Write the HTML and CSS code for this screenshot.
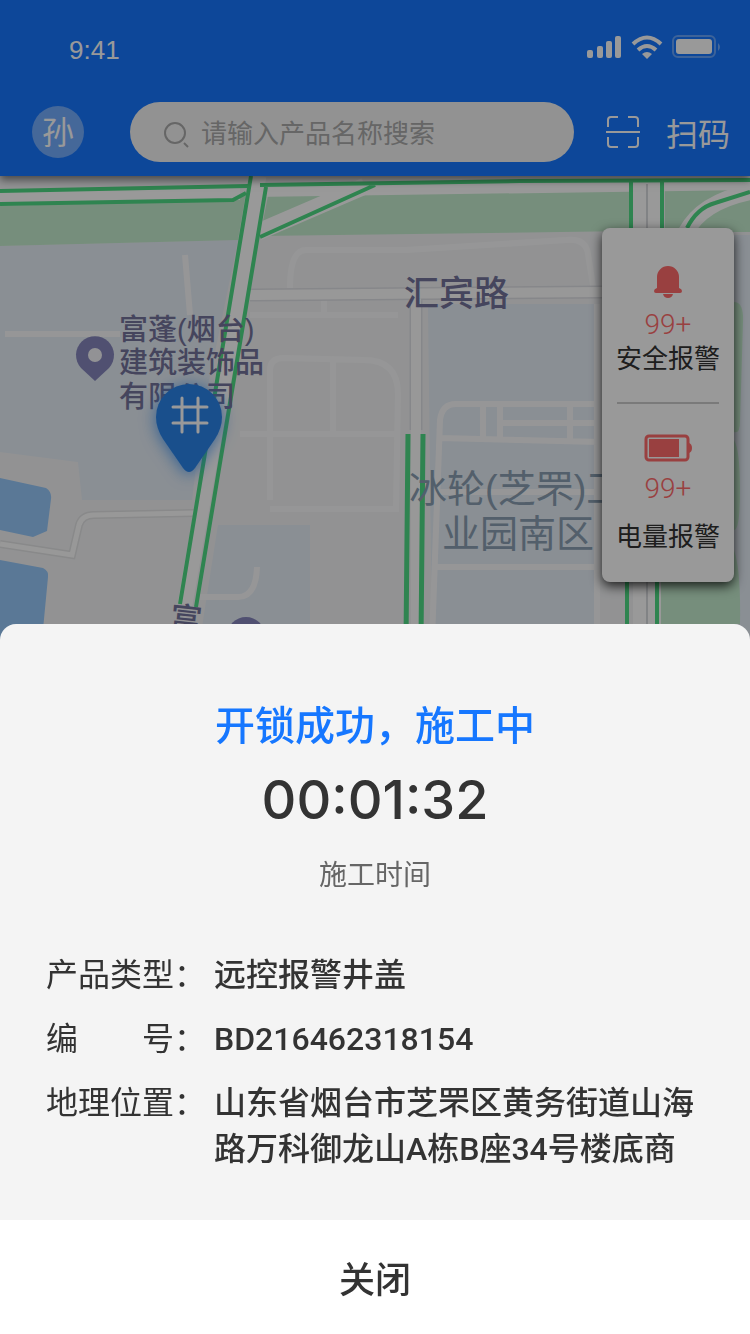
FILE: index.html
```
<!DOCTYPE html>
<html lang="zh-CN">
<head>
  <meta charset="UTF-8">
  <meta name="viewport" content="width=device-width, initial-scale=1.0">
  <title>施工中</title>
  <link rel="stylesheet" href="styles.css">
</head>
<body>
  <!-- 顶部 -->
  <header class="header">
    <div class="status-bar">
      <span>9:41</span>
      <svg class="status-icons" viewBox="0 0 134 24" aria-hidden="true">
        <g fill="#fff">
          <rect x="0" y="15" width="6" height="8" rx="2"/>
          <rect x="10" y="11" width="6" height="12" rx="2"/>
          <rect x="19" y="6" width="6" height="17" rx="2"/>
          <rect x="28" y="1" width="6" height="22" rx="2"/>
          <path d="M60 24l-5-5q5-4 10 0z"/>
        </g>
        <g fill="none" stroke="#fff" stroke-width="4">
          <path d="M46 9q14-13 28 0"/>
          <path d="M51 15q9-8 18 0"/>
        </g>
        <rect x="86" y="1" width="42" height="21" rx="5" fill="none" stroke="#fff" stroke-opacity=".35" stroke-width="2"/>
        <rect x="89" y="4" width="36" height="15" rx="3" fill="#fff"/>
        <path d="M131 8q4 4 0 8z" fill="#fff" opacity=".4"/>
      </svg>
    </div>
    <div class="top-row">
      <span class="avatar">孙</span>
      <label class="search">
        <svg viewBox="0 0 28 28" aria-hidden="true">
          <circle cx="13" cy="13" r="10"/>
          <path d="M22 23l4 4"/>
        </svg>
        <input type="search" placeholder="请输入产品名称搜索" aria-label="搜索产品">
      </label>
      <button class="scan" type="button">
        <svg viewBox="0 0 34 32" aria-hidden="true">
          <path d="M2 11V4q0-3 3-3h7M22 1h7q3 0 3 3v7M32 21v7q0 3-3 3h-7M12 31H5q-3 0-3-3v-7M0 16h34"/>
        </svg>
        扫码
      </button>
    </div>
  </header>

  <!-- 地图 -->
  <main class="map">
    <svg class="map-canvas" viewBox="0 176 750 464" preserveAspectRatio="xMidYMin slice" role="img" aria-label="地图">
      <rect y="176" width="750" height="464" fill="#f3f4f6"/>
      <!-- 地块 -->
      <g fill="#e6eef7">
        <path d="M0 246L238 240 203 410 192 500H82L78 462 0 452z"/>
        <path d="M218 525H310V640H200z"/>
        <path d="M428 304H594V640H432z"/>
        <path d="M734 235h16v405h-16z"/>
      </g>
      <g fill="#c5edcf">
        <path d="M0 206L236 200 246 192 238 240 0 246z"/>
        <path d="M268 196L600 188H632V231L260 236z"/>
        <path d="M665 182H750V232H665z"/>
        <path d="M734 302q10 0 9 20l-3 100q0 12-6 10zM734 440q6 10 6 50t-6 40zM734 550q7 20 6 74H660V580z"/>
      </g>
      <g fill="#96c8fa">
        <path d="M0 478L46 488q6 4 5 11l-4 32-14 6L0 530z"/>
        <path d="M0 560L43 568q6 3 5 9l-6 63H0z"/>
      </g>
      <!-- 小路 -->
      <g fill="none" stroke="#fbfbfc" stroke-width="6">
        <path d="M5 334H120M185 255L190 315M290 288q0-38 16-38l100 0 160-10q20-2 22 14l6 38"/>
        <path d="M250 315H398M324 298v16M270 500V370q0-12 14-12l80 2q34 0 34 34l-2 115-126 0M333 360V434M240 434H400"/>
        <path d="M432 640l8-220q2-16 16-16H600M440 438l160 4M483 404v34M500 404v34M570 404v36M500 423H600M435 567H600M435 492H596M597 304V640"/>
        <path d="M200 597h38q18 0 19-30"/>
      </g>
      <path d="M0 544l72 11 7-30q3-10 15-10l100-2" fill="none" stroke="#e4e5e6" stroke-width="8"/>
      <path d="M0 544l72 11 7-30q3-10 15-10l100-2" fill="none" stroke="#fefefe" stroke-width="5"/>
      <path d="M250 295L602 292M416 295V430" fill="none" stroke="#e0e1e6" stroke-width="13"/>
      <path d="M250 295L602 292M416 295V640" fill="none" stroke="#fefefe" stroke-width="10"/>
      <!-- 主路 -->
      <g fill="none" stroke="#fff">
        <path d="M0 197L240 194M250 191L750 184" stroke-width="12"/>
        <path d="M258 232L365 186" stroke-width="17"/>
        <path d="M259 176L185 605" stroke-width="15"/>
        <path d="M647 184V640" stroke-width="28"/>
        <path d="M686 232Q702 202 750 192" stroke-width="16"/>
      </g>
      <path d="M647 184V640" stroke="#d8dade" stroke-width="2"/>
      <g fill="none" stroke="#4fdc85" stroke-width="4">
        <path d="M0 191L248 186M0 204L233 200 246 193"/>
        <path d="M251 176L180 604M266 187L196 607"/>
        <path d="M260 185L520 181 750 180M260 237L375 185"/>
        <path d="M631 181V231M662 181V231M627 575V640M657 575V640M687 228q10-20 28-25l35-11"/>
        <path d="M408 434L406 640M423 434L421 640" stroke-width="5"/>
      </g>
      <!-- 地名 -->
      <g class="place">
        <text x="119" y="340">富蓬(烟台)</text>
        <text x="119" y="373">建筑装饰品</text>
        <text x="119" y="407">有限公司</text>
        <text class="place-road" x="404" y="306">汇宾路</text>
        <text class="place-street" transform="translate(169 629) rotate(6)">富</text>
      </g>
      <g class="place-area">
        <text x="409" y="502">冰轮(芝罘)工</text>
        <text x="442" y="547">业园南区</text>
      </g>
      <path d="M95 381l-14-13a19 19 0 1 1 28 0z" fill="#8586bd"/>
      <circle cx="95" cy="355" r="7" fill="#f4f4f8"/>
      <circle cx="246" cy="636" r="19" fill="#8586bd"/>
      <!-- 井盖标记 -->
      <g class="marker">
        <path d="M189 472q-3 0-6-4l-20-29q-7-11-7-22a33 33 0 0 1 66 0q0 11-7 22l-20 29q-3 4-6 4z" fill="#2b84ea"/>
        <path d="M182 398v34M198 398v34M173 407h34M173 423h34" fill="none" stroke="#fff" stroke-width="3" stroke-linecap="round"/>
      </g>
    </svg>

    <aside class="alarms">
      <a class="alarm" href="#">
        <svg class="bell" viewBox="0 0 28 32" aria-hidden="true">
          <path d="M3 22V11a11 11 0 0 1 22 0v11q3 1 3 3 0 2-2 2H2q-2 0-2-2 0-2 3-3zM9 28h10q-1 4-5 4t-5-4z"/>
        </svg>
        <span class="alarm-count">99+</span>
        <span class="alarm-name">安全报警</span>
      </a>
      <a class="alarm alarm-power" href="#">
        <svg class="battery" viewBox="0 0 48 28" aria-hidden="true">
          <rect x="2" y="2" width="42" height="24" rx="3" fill="none" stroke="#ff6b6b" stroke-width="3"/>
          <rect x="5" y="5" width="30" height="18"/>
          <path d="M45 9q3 1 3 5t-3 5z"/>
        </svg>
        <span class="alarm-count">99+</span>
        <span class="alarm-name">电量报警</span>
      </a>
    </aside>
  </main>

  <div class="mask"></div>

  <!-- 底部弹窗 -->
  <section class="sheet" role="dialog" aria-labelledby="sheetTitle">
    <div class="sheet-body">
      <h1 class="sheet-title" id="sheetTitle">开锁成功，施工中</h1>
      <div class="timer">00:01:32</div>
      <p class="timer-label">施工时间</p>
      <dl class="info">
        <dt>产品类型：</dt>
        <dd>远控报警井盖</dd>
        <dt>编　　号：</dt>
        <dd>BD216462318154</dd>
        <dt>地理位置：</dt>
        <dd>山东省烟台市芝罘区黄务街道山海路万科御龙山A栋B座34号楼底商</dd>
      </dl>
    </div>
    <button class="close" type="button">关闭</button>
  </section>
</body>
</html>
```
FILE: styles.css
```
* {
  box-sizing: border-box;
}

body {
  display: flex;
  flex-direction: column;
  min-height: 100vh;
  margin: 0;
  background-color: #f4f4f4;
  color: #333333;
  font-family: "Liberation Sans", "Noto Sans CJK SC", sans-serif;
}

button {
  border: none;
  padding: 0;
  background: none;
  color: inherit;
  font-family: inherit;
  cursor: pointer;
}

/* 顶部 */
.header {
  position: relative;
  z-index: 1;
  background-color: #1677ff;
  color: #ffffff;
  padding: 32px 20px 14px 32px;
  box-shadow: 0 4px 8px rgba(0, 0, 0, 0.5);
}

.status-bar {
  display: flex;
  justify-content: space-between;
  padding: 0 9px 0 37px;
  height: 70px;
  font-size: 26px;
  line-height: 36px;
}

.status-icons {
  width: 134px;
  height: 24px;
  margin-top: 3px;
}

.top-row {
  display: flex;
  align-items: center;
}

.avatar {
  width: 52px;
  height: 52px;
  border-radius: 50%;
  background-color: rgba(255, 255, 255, 0.4);
  font-size: 32px;
  line-height: 54px;
  text-align: center;
}

.search {
  display: flex;
  flex: 1;
  align-items: center;
  gap: 11px;
  min-width: 0;
  height: 60px;
  margin: 0 32px 0 46px;
  padding: 4px 32px 0;
  border-radius: 30px;
  background-color: #f4f4f4;
}

.search svg {
  flex: none;
  width: 28px;
  height: 28px;
  fill: none;
  stroke: #aaaaaa;
  stroke-width: 2;
}

.search input {
  flex: 1;
  min-width: 0;
  border: none;
  padding: 0;
  outline: none;
  background: none;
  font-family: inherit;
  font-size: 26px;
}

.search input::placeholder {
  color: #aaaaaa;
}

.scan {
  display: flex;
  align-items: center;
  gap: 26px;
  font-size: 32px;
}

.scan svg {
  width: 34px;
  height: 32px;
  fill: none;
  stroke: #ffffff;
  stroke-width: 2;
}

/* 地图 */
.map {
  position: relative;
  flex: 1;
  overflow: hidden;
}

.map-canvas {
  position: absolute;
  width: 100%;
  height: 100%;
}

.place {
  fill: #74739c;
  font-size: 29px;
  font-weight: 500;
}

.place-road {
  font-size: 35px;
}

.place-street {
  font-size: 32px;
}

.place-area {
  fill: #8a9fb3;
  font-size: 38px;
}

.marker {
  filter: drop-shadow(0 2px 8px rgba(43, 137, 242, 0.8));
}

/* 报警面板 */
.alarms {
  position: absolute;
  top: 52px;
  right: 16px;
  width: 132px;
  padding: 38px 15px 28px;
  border-radius: 8px;
  background-color: #ffffff;
  box-shadow: 0 4px 12px rgba(0, 0, 0, 0.8);
}

.alarm {
  display: flex;
  flex-direction: column;
  align-items: center;
  color: #333333;
  text-decoration: none;
}

.alarm svg {
  fill: #ff6b6b;
}

.bell {
  width: 28px;
  height: 32px;
}

.battery {
  width: 48px;
  height: 28px;
}

.alarm-count {
  margin-top: 10px;
  color: #ff6b6b;
  font-family: Roboto, sans-serif;
  font-size: 28px;
  font-weight: 300;
  line-height: 34px;
}

.alarm-name {
  font-size: 26px;
  line-height: 34px;
  white-space: nowrap;
}

.alarm-power {
  margin-top: 26px;
  padding-top: 30px;
  border-top: 2px solid #cccccc;
}

.alarm-power .alarm-name {
  margin-top: 14px;
}

.mask {
  position: fixed;
  inset: 0;
  z-index: 2;
  background-color: rgba(0, 0, 0, 0.4);
}

/* 底部弹窗 */
.sheet {
  position: relative;
  z-index: 3;
  margin-top: -16px;
  border-radius: 16px 16px 0 0;
  overflow: hidden;
  background-color: #f4f4f4;
}

.sheet-body {
  padding: 70px 46px 48px;
  text-align: center;
}

.sheet-title {
  margin: 0;
  color: #1677ff;
  font-size: 40px;
  font-weight: 500;
  line-height: 64px;
}

.timer {
  font-family: Inter, sans-serif;
  font-size: 54px;
  font-weight: 500;
  line-height: 84px;
}

.timer-label {
  margin: 14px 0 56px;
  color: #666666;
  font-size: 28px;
  line-height: 40px;
}

.info {
  display: grid;
  grid-template-columns: 168px 1fr;
  row-gap: 18px;
  margin: 0;
  font-size: 32px;
  line-height: 46px;
  text-align: left;
}

.info dd {
  margin: 0;
  font-family: Roboto, "Noto Sans CJK SC", sans-serif;
  font-weight: 500;
}

.close {
  display: block;
  width: 100%;
  height: 114px;
  background-color: #ffffff;
  font-size: 36px;
  font-weight: 500;
}
```
